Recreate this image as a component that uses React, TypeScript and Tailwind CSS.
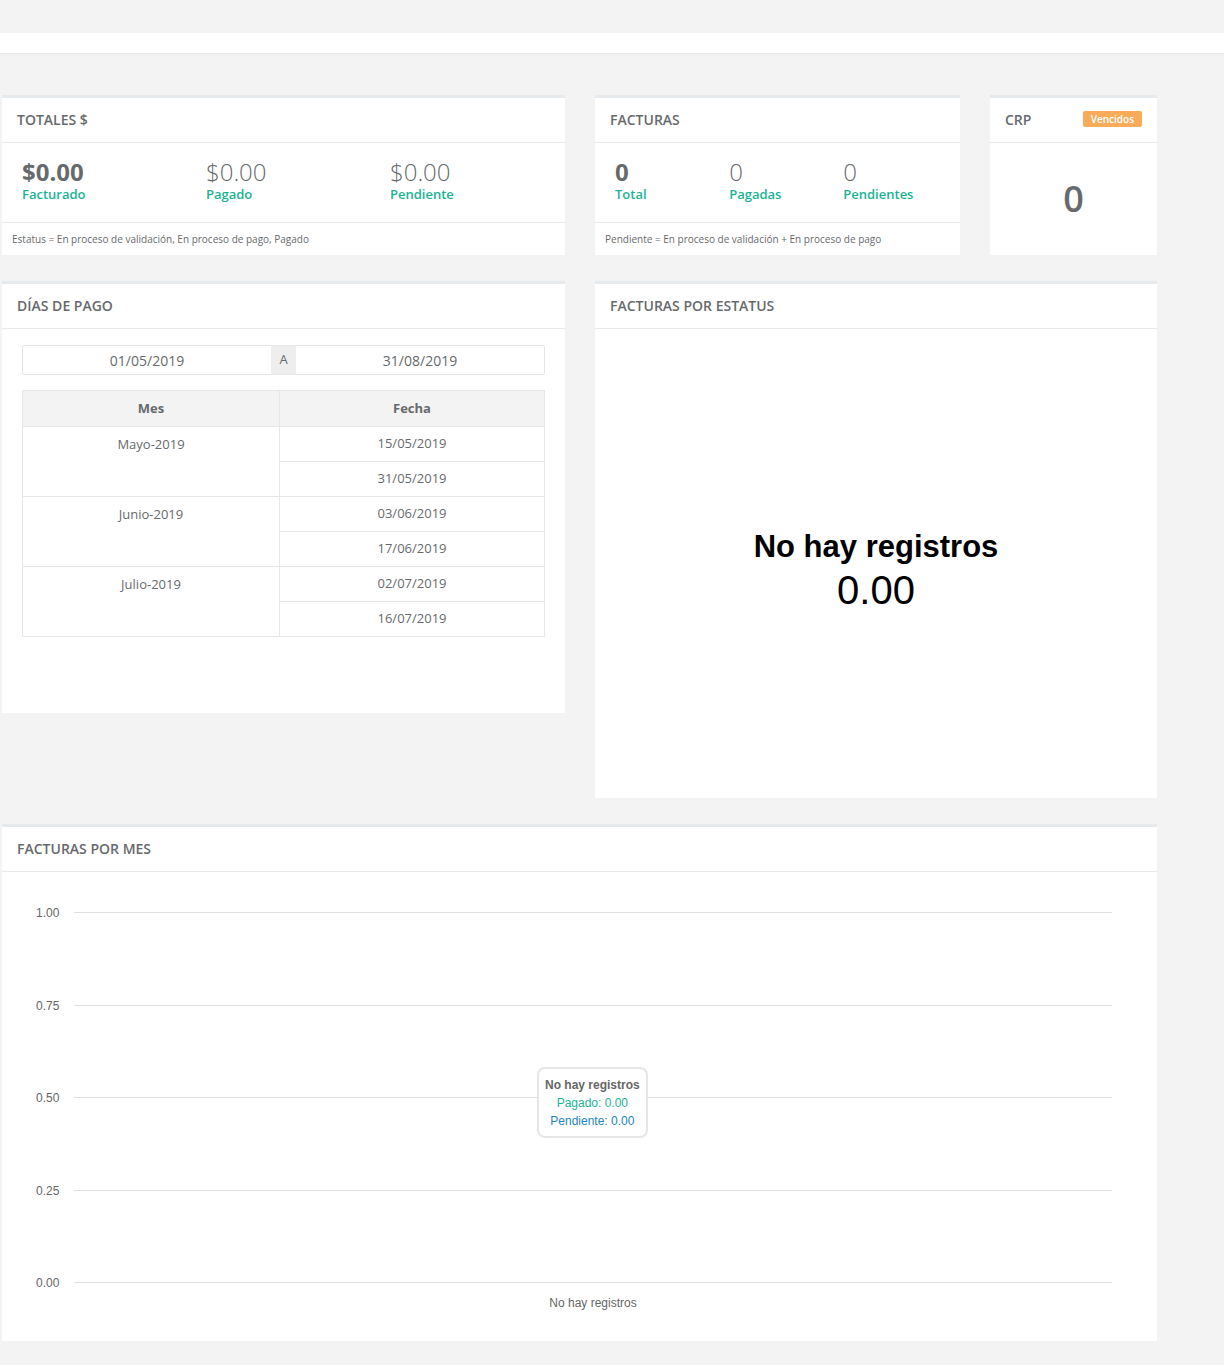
const os = { fontFamily: '"Open Sans", "Liberation Sans", sans-serif' };

function Card({ title, extra, children, className = "" }: { title: string; extra?: React.ReactNode; children: React.ReactNode; className?: string }) {
  return (
    <div className={"bg-white border-t-[3px] border-[#e7eaec] flex flex-col " + className}>
      <div className="h-[45px] flex items-center justify-between px-[15px] pb-[2px] border-b border-[#e7eaec] shrink-0">
        <span className="text-[14px] font-semibold text-[#676a6c]">{title}</span>
        {extra}
      </div>
      {children}
    </div>
  );
}

function Stat({ v, l, bold, w }: { v: string; l: string; bold?: boolean; w: string }) {
  return (
    <div className={w}>
      <div className={"text-[24px] leading-[26px] text-[#676a6c] " + (bold ? "font-bold" : "font-light")}>{v}</div>
      <div className="text-[13px] font-semibold text-[#1ab394] leading-[18px]">{l}</div>
    </div>
  );
}

const rows = [
  ["Mayo-2019", "15/05/2019", "31/05/2019"],
  ["Junio-2019", "03/06/2019", "17/06/2019"],
  ["Julio-2019", "02/07/2019", "16/07/2019"],
];

export default function App() {
  const ticks = ["1.00", "0.75", "0.50", "0.25", "0.00"];
  return (
    <div className="bg-[#f3f3f4] min-h-[1365px] pb-[22px]" style={os}>
      <div className="h-[33px]" />
      <div className="h-[21px] bg-white border-b border-[#e7eaec]" />
      <div className="pl-[2px] pt-[41px] w-[1157px]">
        <div className="flex gap-[30px]">
          <Card title="TOTALES $" className="w-[563px] h-[160px]">
            <div className="flex px-[20px] pt-[16px] h-[80px] border-b border-[#e7eaec]">
              <Stat w="w-[184px]" v="$0.00" l="Facturado" bold />
              <Stat w="w-[184px]" v="$0.00" l="Pagado" />
              <Stat w="w-[150px]" v="$0.00" l="Pendiente" />
            </div>
            <div className="px-[10px] pt-[9px] text-[10px] text-[#676a6c]">Estatus = En proceso de validación, En proceso de pago, Pagado</div>
          </Card>
          <Card title="FACTURAS" className="w-[365px] h-[160px]">
            <div className="flex px-[20px] pt-[16px] h-[80px] border-b border-[#e7eaec]">
              <Stat w="w-[118px]" v="0" l="Total" bold />
              <Stat w="w-[118px]" v="0" l="Pagadas" />
              <Stat w="w-[100px]" v="0" l="Pendientes" />
            </div>
            <div className="px-[10px] pt-[9px] text-[10px] text-[#676a6c]">Pendiente = En proceso de validación + En proceso de pago</div>
          </Card>
          <Card
            title="CRP"
            className="w-[167px] h-[160px]"
            extra={<span className="bg-[#f8ac59] text-white text-[10px] font-semibold px-[8px] leading-[16px] rounded-[2px]">Vencidos</span>}
          >
            <div className="flex-1 flex items-center justify-center text-[36px] font-semibold text-[#676a6c]">0</div>
          </Card>
        </div>

        <div className="flex gap-[30px] mt-[26px] items-start">
          <Card title="DÍAS DE PAGO" className="w-[563px] h-[432px]">
            <div className="px-[20px] pt-[16px]">
              <div className="flex h-[30px] border border-[#e5e6e7] rounded-[2px] text-[14px] text-[#676a6c]">
                <div className="flex-1 flex items-center justify-center">01/05/2019</div>
                <div className="w-[25px] bg-[#eeeeee] flex items-center justify-center text-[13px]">A</div>
                <div className="flex-1 flex items-center justify-center">31/08/2019</div>
              </div>
              <table className="w-full mt-[15px] border-collapse text-[13px] text-[#676a6c]">
                <thead>
                  <tr className="bg-[#f3f3f3] h-[36px]">
                    <th className="border border-[#e7e7e7] w-[257px] font-bold">Mes</th>
                    <th className="border border-[#e7e7e7] font-bold">Fecha</th>
                  </tr>
                </thead>
                <tbody>
                  {rows.map((r) => [
                    <tr key={r[0]} className="h-[35px]">
                      <td rowSpan={2} className="border border-[#e7e7e7] text-center align-top pt-[8px]">{r[0]}</td>
                      <td className="border border-[#e7e7e7] text-center">{r[1]}</td>
                    </tr>,
                    <tr key={r[0] + "b"} className="h-[35px]">
                      <td className="border border-[#e7e7e7] text-center">{r[2]}</td>
                    </tr>,
                  ])}
                </tbody>
              </table>
            </div>
          </Card>
          <Card title="FACTURAS POR ESTATUS" className="w-[562px] h-[517px]">
            <div className="flex-1 flex flex-col items-center justify-center text-black pt-[14px]" style={{ fontFamily: '"Liberation Sans", Arial, sans-serif' }}>
              <div className="text-[31px] font-bold leading-[38px]">No hay registros</div>
              <div className="text-[40px] leading-[48px]">0.00</div>
            </div>
          </Card>
        </div>

        <Card title="FACTURAS POR MES" className="mt-[26px] h-[517px]">
          <div className="relative flex-1" style={{ fontFamily: '"Liberation Sans", Arial, sans-serif' }}>
            <div className="flex flex-col pt-[34px] pl-[34px] pr-[45px]">
              {ticks.map((t, i) => (
                <div key={t} className={"flex items-start " + (i < 4 ? "h-[92.5px]" : "")}>
                  <span className="w-[38px] text-[12px] text-[#666] leading-[14px]">{t}</span>
                  <div className="flex-1 border-t border-[#e0e0e0] mt-[6px]" />
                </div>
              ))}
              <div className="text-center text-[12px] text-[#666] mt-[4px] pl-[38px]">No hay registros</div>
            </div>
            <div className="absolute left-[535px] top-[195px] bg-white border-2 border-[#e6e6e6] rounded-[8px] px-[6px] pt-[7px] pb-[6px] text-[12px] text-center leading-[18px]">
              <div className="font-bold text-[#666]">No hay registros</div>
              <div className="text-[#1ab394]">Pagado: 0.00</div>
              <div className="text-[#1c84c6]">Pendiente: 0.00</div>
            </div>
          </div>
        </Card>
      </div>
    </div>
  );
}
